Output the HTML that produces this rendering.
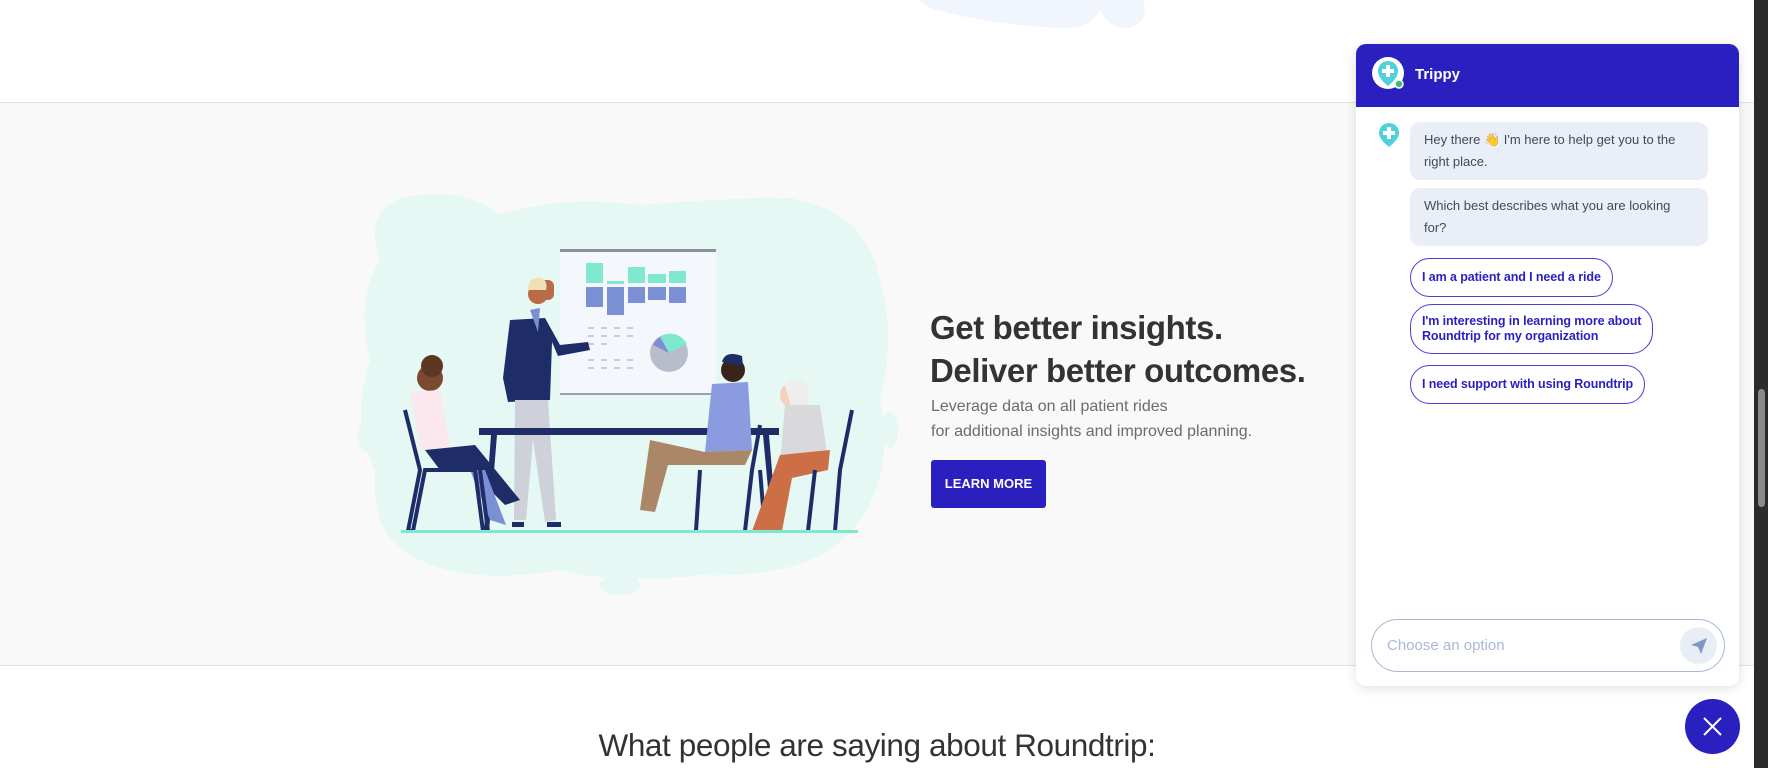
<!DOCTYPE html>
<html><head><meta charset="utf-8"><style>
*{margin:0;padding:0;box-sizing:border-box}
body{width:1768px;height:768px;overflow:hidden;background:#fff;font-family:"Liberation Sans",sans-serif;position:relative}
.abs{position:absolute}
#sec{left:0;top:102px;width:1754px;height:564px;background:#f9f9f9;border-top:1px solid #e2e2e2;border-bottom:1px solid #e2e2e2}
h2{position:absolute;left:930px;top:306px;font-size:33px;line-height:43px;color:#333;font-weight:bold;letter-spacing:-0.4px}
.p{position:absolute;left:931px;top:394px;font-size:16px;line-height:25px;color:#6b6b6b}
.btn{position:absolute;left:931px;top:460px;width:115px;height:48px;background:#2a1fbf;border-radius:3px;color:#fff;font-weight:bold;font-size:13px;text-align:center;line-height:48px}
.bt{position:absolute;left:0;width:1754px;top:727px;text-align:center;font-size:31.5px;color:#333;letter-spacing:-0.4px}
#chat{left:1356px;top:44px;width:383px;height:642px;background:#fff;border-radius:10px;box-shadow:0 2px 12px rgba(0,0,0,.12);overflow:hidden}
#hd{height:63px;background:#2a1fbf;position:relative}
.bub{position:absolute;left:54px;width:298px;background:#eaeff7;border-radius:10px;padding:7px 14px;font-size:13px;line-height:22px;color:#3e4a5c}
.op{position:absolute;left:54px;border:1.5px solid #4a3fd6;border-radius:22px;color:#2a1fbf;font-weight:bold;font-size:12.5px;line-height:15px;padding:11px 11px;white-space:nowrap;letter-spacing:-0.1px}
</style></head><body>
<svg class="abs" style="left:0;top:0" width="1768" height="768">
<path d="M919 0 L1143 0 Q1150 20 1130 28 Q1110 30 1100 10 Q1090 30 1060 28 Q990 25 930 8Z" fill="#f1f5fd"/>
</svg>
<div id="sec" class="abs"></div>
<svg class="abs" style="left:0;top:0" width="1768" height="768">
<g>
<path d="M380 260 Q360 200 420 195 Q470 190 500 215 Q560 195 640 205 Q700 200 760 198 Q840 195 870 250 Q900 320 880 400 Q895 470 860 520 Q820 580 700 575 Q620 585 560 570 Q470 585 420 560 Q370 540 375 470 Q350 420 370 360 Q355 300 380 260Z" fill="#e5f8f3"/>
<ellipse cx="430" cy="215" rx="22" ry="18" fill="#e5f8f3"/>
<ellipse cx="788" cy="210" rx="18" ry="12" fill="#e5f8f3"/>
<ellipse cx="402" cy="260" rx="10" ry="14" fill="#e5f8f3"/>
<ellipse cx="368" cy="435" rx="10" ry="18" fill="#e5f8f3"/>
<ellipse cx="620" cy="585" rx="20" ry="10" fill="#e5f8f3"/>
<ellipse cx="890" cy="430" rx="8" ry="18" fill="#e5f8f3"/>
<rect x="560" y="250" width="156" height="145" fill="#f4f7fc"/>
<rect x="560" y="249" width="156" height="3" fill="#8a90a0"/>
<rect x="560" y="393" width="156" height="2" fill="#9aa0ae"/>
<g fill="#7ee8d0"><rect x="586" y="263" width="17" height="20"/><rect x="607" y="281" width="17" height="3"/><rect x="628" y="267" width="17" height="16"/><rect x="648" y="274" width="18" height="9"/><rect x="669" y="271" width="17" height="12"/></g>
<g fill="#7b8fd4"><rect x="586" y="287" width="17" height="20"/><rect x="607" y="287" width="17" height="28"/><rect x="628" y="287" width="17" height="16"/><rect x="648" y="287" width="18" height="13"/><rect x="669" y="287" width="17" height="16"/></g>
<g fill="#c8ccd6"><rect x="588" y="327" width="6" height="2"/><rect x="601" y="327" width="6" height="2"/><rect x="614" y="327" width="6" height="2"/><rect x="627" y="327" width="6" height="2"/><rect x="588" y="335" width="6" height="2"/><rect x="601" y="335" width="6" height="2"/><rect x="614" y="335" width="6" height="2"/><rect x="627" y="335" width="6" height="2"/><rect x="588" y="343" width="6" height="2"/><rect x="601" y="343" width="6" height="2"/><rect x="588" y="359" width="6" height="2"/><rect x="601" y="359" width="6" height="2"/><rect x="614" y="359" width="6" height="2"/><rect x="627" y="359" width="6" height="2"/><rect x="588" y="367" width="6" height="2"/><rect x="601" y="367" width="6" height="2"/><rect x="614" y="367" width="6" height="2"/><rect x="627" y="367" width="6" height="2"/></g>
<circle cx="669" cy="353" r="19" fill="#b9bccb"/>
<path d="M669 353 L661 336 A19 19 0 0 1 687 344Z" fill="#7ee8d0"/>
<path d="M669 353 L653 345 A19 19 0 0 1 660 337Z" fill="#7b8fd4"/>
<path d="M510 320 L545 318 L560 345 L588 342 L590 350 L558 356 L552 342 L550 400 L508 402 L503 378Z" fill="#1e2c68"/>
<path d="M515 400 L548 400 L556 520 L545 522 L533 440 L526 520 L514 520Z" fill="#cfd1da"/>
<rect x="540" y="280" width="14" height="20" rx="6" fill="#b86b45"/>
<circle cx="538" cy="294" r="10" fill="#b86b45"/><path d="M528 290 Q528 276 542 278 Q548 282 546 290Z" fill="#f1dfb6"/>
<path d="M530 310 L540 308 L538 332Z" fill="#7b8fd4"/>
<rect x="512" y="522" width="12" height="5" fill="#1e2c68"/><rect x="547" y="522" width="14" height="5" fill="#1e2c68"/>
<rect x="479" y="428" width="300" height="7" fill="#1e2c68"/>
<path d="M491 435 L484 531 L489 531 L497 435Z M763 435 L772 531 L777 531 L769 435Z" fill="#1e2c68"/>
<circle cx="430" cy="378" r="13" fill="#7a4a30"/><circle cx="432" cy="366" r="11" fill="#5e3624"/>
<path d="M410 392 L440 390 L450 447 L420 450Z" fill="#fbe8ee"/>
<path d="M425 450 L475 445 L520 500 L505 505 L470 470 L440 470Z" fill="#1e2c68"/>
<path d="M470 470 L490 520 L506 525 L485 470Z" fill="#7b8fd4"/>
<path d="M405 410 L420 470 L408 531 L413 531 L425 470 L475 470 L483 531 L488 531 L480 470" stroke="#1e2c68" stroke-width="4" fill="none"/>
<circle cx="733" cy="370" r="12" fill="#3a2418"/><path d="M722 362 Q725 350 742 356 L743 366Z" fill="#1e2c68"/>
<path d="M712 384 L748 382 L752 450 L705 452Z" fill="#8a9be0"/>
<path d="M705 452 L650 440 L640 510 L655 512 L668 465 L745 465 L752 450Z" fill="#a98767"/>
<path d="M760 425 L752 470 L745 531 M760 470 L765 531 M700 470 L696 531" stroke="#1e2c68" stroke-width="4" fill="none"/>
<circle cx="793" cy="395" r="13" fill="#f3d3bd"/><path d="M785 385 Q795 372 808 385 L810 425 L795 420Z" fill="#eeeeee"/>
<path d="M785 405 L820 405 L828 460 L780 462Z" fill="#d9d9dc"/>
<path d="M780 455 L830 450 L828 470 L792 478 L782 531 L752 531 Z" fill="#cc6f46"/>
<path d="M852 410 L840 470 L835 531 M815 470 L808 531" stroke="#1e2c68" stroke-width="4" fill="none"/>
<rect x="401" y="530" width="457" height="3" fill="#7de8d0"/>
</g>
</svg>
<h2>Get better insights.<br>Deliver better outcomes.</h2>
<div class="p">Leverage data on all patient rides<br>for additional insights and improved planning.</div>
<div class="btn">LEARN MORE</div>
<div class="bt">What people are saying about Roundtrip:</div>

<div id="chat" class="abs">
<div id="hd">
<svg class="abs" style="left:14px;top:11px" width="38" height="38"><circle cx="18" cy="18" r="16" fill="#fff"/><path d="M18 6 A10 10 0 0 1 28 16 Q28 23 18 31 Q8 23 8 16 A10 10 0 0 1 18 6Z" fill="#4fd1dc"/><rect x="16" y="10" width="4" height="12" fill="#fff"/><rect x="12" y="14" width="12" height="4" fill="#fff"/><circle cx="29" cy="29" r="4" fill="#3dbb7a" stroke="#fff" stroke-width="1.5"/></svg>
<div class="abs" style="left:59px;top:22px;color:#fff;font-weight:bold;font-size:15px">Trippy</div>
</div>
<svg class="abs" style="left:22px;top:78px" width="22" height="26"><path d="M11 1 A10 10 0 0 1 21 11 Q21 17 11 25 Q1 17 1 11 A10 10 0 0 1 11 1Z" fill="#4fd1dc"/><rect x="9" y="5" width="4" height="12" fill="#fff"/><rect x="5" y="9" width="12" height="4" fill="#fff"/></svg>
<div class="bub" style="top:78px">Hey there 👋 I'm here to help get you to the right place.</div>
<div class="bub" style="top:144px">Which best describes what you are looking for?</div>
<div class="op" style="top:214px">I am a patient and I need a ride</div>
<div class="op" style="top:260px;padding:9px 11px">I'm interesting in learning more about<br>Roundtrip for my organization</div>
<div class="op" style="top:321px">I need support with using Roundtrip</div>
<div class="abs" style="left:15px;top:575px;width:354px;height:53px;border:1.5px solid #a9b9d2;border-radius:27px"></div>
<div class="abs" style="left:31px;top:593px;font-size:15px;color:#a9b9d2">Choose an option</div>
<div class="abs" style="left:324px;top:583px;width:37px;height:37px;border-radius:50%;background:#e9eef6"></div>
<svg class="abs" style="left:333px;top:592px" width="20" height="20"><path d="M2 9 L18 2 L12 18 L9 11Z" fill="#7f9ac0"/></svg>
</div>
<div class="abs" style="left:1685px;top:699px;width:55px;height:55px;border-radius:50%;background:#2a1fbf"></div>
<svg class="abs" style="left:1700px;top:714px" width="25" height="25"><path d="M4 4 L21 21 M21 4 L4 21" stroke="#fff" stroke-width="2"/></svg>
<div class="abs" style="left:1754px;top:0;width:14px;height:768px;background:#2b2b2b"></div>
<div class="abs" style="left:1758px;top:389px;width:7px;height:118px;border-radius:4px;background:#8a8a8a"></div>
</body></html>
